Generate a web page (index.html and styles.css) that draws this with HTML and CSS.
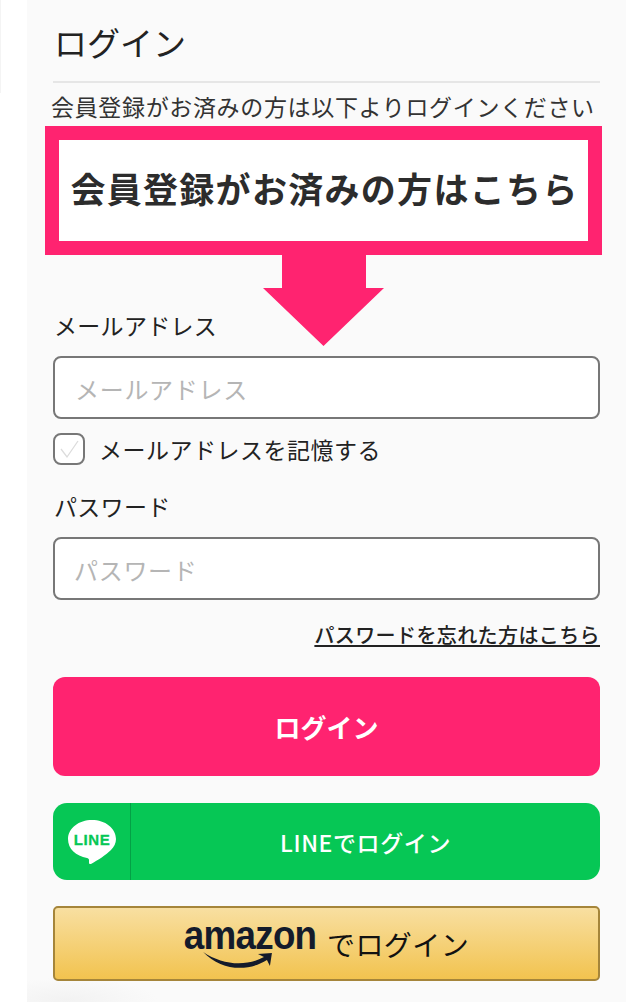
FILE: index.html
```html
<!DOCTYPE html>
<html lang="ja">
<head>
<meta charset="utf-8">
<title>ログイン</title>
<link rel="stylesheet" href="styles.css">
</head>
<body>
<div class="edge"></div>
<main class="panel">
  <h1 class="title">ログイン</h1>
  <p class="lead">会員登録がお済みの方は以下よりログインください</p>
  <div class="callout">会員登録がお済みの方はこちら</div>
  <svg class="arrow" width="121" height="91" viewBox="0 0 121 91"><path d="M19 0h84v33h18L60.500 91 0 33h19z" fill="#ff2370"/></svg>
  <form class="form">
    <label class="label first">メールアドレス</label>
    <div class="input">メールアドレス</div>
    <div class="remember">
      <span class="check"><svg width="22" height="20" viewBox="0 0 22 20"><path d="M3 10l6 8L20 2" fill="none" stroke="#dcdcdc" stroke-width="1.3"/></svg></span>
      <span>メールアドレスを記憶する</span>
    </div>
    <label class="label second">パスワード</label>
    <div class="input input-pass">パスワード</div>
    <div class="forgot"><a href="#">パスワードを忘れた方はこちら</a></div>
    <button type="button" class="btn btn-login">ログイン</button>
    <button type="button" class="btn btn-line">
      <span class="line-icon">
        <svg width="48" height="46" viewBox="0 0 48 46"><path d="M24 1C11 1 0 9 0 20c0 10 8 17 19 19 1 0 2 1 2 2v3c0 1 1 1 2 1 7-4 15-9 20-14 3-3 5-7 5-11C48 9 37 1 24 1z" fill="#fff"/><text x="24" y="25.500" text-anchor="middle" class="line-text">LINE</text></svg>
      </span>
      <span class="line-label">LINEでログイン</span>
    </button>
    <button type="button" class="btn btn-amazon">
      <span class="amazon-logo">amazon<svg class="smile" width="78" height="19" viewBox="0 0 72 19" preserveAspectRatio="none"><path d="M1 1c19 13 43 15 61 5l-6-3 14-1-2 13-3-6C46 21 19 20 1 1z" fill="#141b2b"/></svg></span>
      <span class="amazon-label">でログイン</span>
    </button>
  </form>
</main>
</body>
</html>
```
FILE: styles.css
```css
* { box-sizing: border-box; }
html, body { margin: 0; height: 1002px; overflow: hidden; background: #fff; }
body { position: relative; font-family: "Noto Sans CJK JP", "Noto Sans", sans-serif; color: #222; }
.edge { position: absolute; left: 0; top: 0; width: 1px; height: 93px; background: #f4f4f4; }
.panel { position: relative; margin-left: 27px; width: 599px; height: 1002px; background: radial-gradient(ellipse 90px 22px at 40px 1000px, #f2f2f2, #fafafa); padding-top: 1px; }
.title { margin: 0 26px; height: 82px; border-bottom: 2px solid #e6e6e6; font-size: 33px; font-weight: 400; line-height: 44px; padding-top: 19px; padding-left: 1px; color: #222; }
.lead { margin: 0 0 0 24px; height: 43px; font-size: 23px; line-height: 46px; letter-spacing: 0.660px; white-space: nowrap; color: #333; }
.callout { margin-left: 18px; width: 557px; height: 129px; border: 14px solid #ff2370; background: #fff; font-size: 35px; font-weight: 700; line-height: 95px; letter-spacing: 1.300px; text-align: center; padding-left: 2px; color: #2c2c2c; white-space: nowrap; }
.arrow { position: absolute; left: 236px; top: 255px; display: block; }
.form { display: flex; flex-direction: column; padding: 0 26px; }
.label { font-size: 23px; letter-spacing: 0.300px; line-height: 32px; padding-left: 1px; color: #222; }
.label.first { margin-top: 54px; }
.label.second { margin-top: 25px; }
.input { margin-top: 15px; height: 63px; border: 2px solid #777; border-radius: 8px; background: #fff; font-size: 24px; letter-spacing: 0.700px; line-height: 61px; padding-left: 20px; color: #b5b5b5; }
.input-pass { padding-left: 19px; }
.remember { display: flex; align-items: center; gap: 14px; margin-top: 14px; height: 32px; font-size: 23px; letter-spacing: 0.500px; color: #222; }
.check { display: flex; align-items: center; justify-content: center; width: 32px; height: 32px; border: 2px solid #777; border-radius: 8px; background: #fff; }
.forgot { margin-top: 20px; text-align: right; font-size: 20px; font-weight: 500; line-height: 30px; letter-spacing: 0.400px; height: 36px; }
.forgot a { color: #222; text-decoration: underline; text-underline-offset: 2px; text-decoration-thickness: 2px; }
.btn { display: flex; align-items: center; justify-content: center; width: 547px; padding: 0; font-family: inherit; border-style: solid; }
.btn-login { margin-top: 21px; height: 99px; border: 0; border-radius: 12px; background: #ff2370; color: #fff; font-size: 26px; font-weight: 700; }
.btn-line { position: relative; margin-top: 27px; height: 77px; border: 0; border-radius: 14px; background: #06c755; color: #fff; font-size: 23px; font-weight: 500; letter-spacing: 0.600px; padding-left: 78px; }
.line-icon { position: absolute; left: 0; top: 0; bottom: 0; width: 78px; border-right: 1px solid #04a046; display: flex; align-items: center; justify-content: center; padding-top: 1px; }
.line-text { font-family: "Liberation Sans", sans-serif; font-size: 15px; font-weight: 700; fill: #06c755; stroke: #06c755; stroke-width: 0.300px; }
.btn-amazon { margin-top: 26px; height: 75px; border: 2px solid #a5853a; border-radius: 5px; background: linear-gradient(#f8dfa1, #f2c34f); color: #111; gap: 5px; font-size: 28px; letter-spacing: 0.400px; padding-right: 6px; }
.amazon-logo { position: relative; font-family: "Liberation Sans", sans-serif; font-weight: 700; font-size: 40px; line-height: 40px; letter-spacing: -0.800px; color: #141b2b; transform: scaleX(0.92); margin-top: -18px; }
.smile { position: absolute; left: 20px; top: 36px; }
.amazon-label { font-weight: 400; }
```
